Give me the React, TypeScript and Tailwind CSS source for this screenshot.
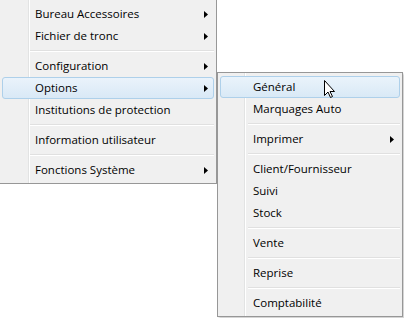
import React from 'react';

type Entry = { label?: string; sub?: boolean; active?: boolean; sep?: boolean };

const mainItems: Entry[] = [
  { label: 'Bureau Accessoires', sub: true },
  { label: 'Fichier de tronc', sub: true },
  { sep: true },
  { label: 'Configuration', sub: true },
  { label: 'Options', sub: true, active: true },
  { label: 'Institutions de protection' },
  { sep: true },
  { label: 'Information utilisateur' },
  { sep: true },
  { label: 'Fonctions Système', sub: true },
];

const optionItems: Entry[] = [
  { label: 'Général', active: true },
  { label: 'Marquages Auto' },
  { sep: true },
  { label: 'Imprimer', sub: true },
  { sep: true },
  { label: 'Client/Fournisseur' },
  { label: 'Suivi' },
  { label: 'Stock' },
  { sep: true },
  { label: 'Vente' },
  { sep: true },
  { label: 'Reprise' },
  { sep: true },
  { label: 'Comptabilité' },
];

const Arrow = () => (
  <svg width="4" height="7" viewBox="0 0 4 7" className="shrink-0">
    <path d="M0 0 L4 3.5 L0 7 Z" fill="#000" />
  </svg>
);

const MenuList = ({ items }: { items: Entry[] }) => (
  <div className="flex flex-col">
    {items.map((it, i) =>
      it.sep ? (
        <div key={i} className="h-[8px] flex flex-col justify-center pl-[30px] pr-[2px]">
          <div className="h-px bg-[#e0e0e0]" />
          <div className="h-px bg-white" />
        </div>
      ) : (
        <div
          key={i}
          className={
            it.active
              ? 'mx-[2px] h-[22px] flex items-center gap-2 rounded-[3px] border border-[#aed0ea] bg-gradient-to-b from-[#eaf3fb] to-[#d9e9f6] pl-[32px] pr-[5px]'
              : 'mx-[2px] h-[22px] flex items-center gap-2 rounded-[3px] border border-transparent pl-[32px] pr-[5px]'
          }
        >
          <span className="flex-1 text-[11.5px] text-black whitespace-nowrap">{it.label}</span>
          {it.sub && <Arrow />}
        </div>
      )
    )}
  </div>
);

export default function App() {
  return (
    <div
      className="relative w-[404px] h-[318px] bg-white overflow-hidden"
      style={{ fontFamily: '"Open Sans", "Noto Sans", sans-serif' }}
    >
      {/* main menu */}
      <div className="w-[217px] border-r border-b border-[#979797] pt-[3px] pb-[2px] bg-[linear-gradient(to_right,#f0f0f0_28px,#e2e3e3_28px,#e2e3e3_29px,#ffffff_29px,#ffffff_30px,#f0f0f0_30px)]">
        <MenuList items={mainItems} />
      </div>

      {/* submenu: Options */}
      <div className="absolute left-[217px] top-[72px] w-[186px] border border-[#979797] pt-[3px] pb-[2px] shadow-[2px_2px_2px_rgba(0,0,0,0.18)] bg-[linear-gradient(to_right,#f0f0f0_26px,#e2e3e3_26px,#e2e3e3_27px,#ffffff_27px,#ffffff_28px,#f0f0f0_28px)]">
        <MenuList items={optionItems} />
      </div>

      {/* mouse cursor */}
      <svg width="12" height="19" viewBox="0 0 12 19" className="absolute left-[324px] top-[80px]">
        <path
          d="M0.5 0.5 L0.5 15.5 L4 12 L6.5 17.5 L8.5 16.5 L6 11.5 L10.5 11.5 Z"
          fill="#fff"
          stroke="#000"
          strokeWidth="1"
        />
      </svg>
    </div>
  );
}
